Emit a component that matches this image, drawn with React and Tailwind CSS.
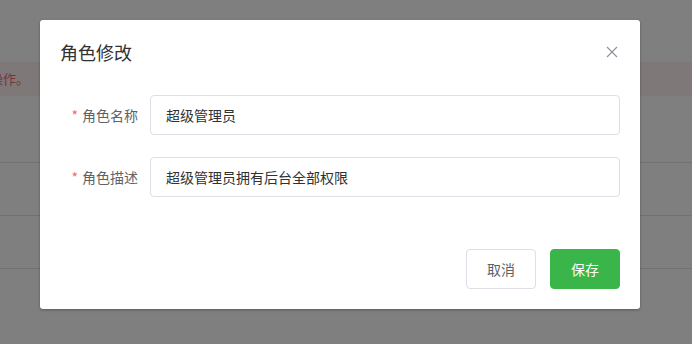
import React from "react";

const font = { fontFamily: '"Noto Sans CJK SC", "Noto Sans", sans-serif' };

function FormRow({ label, value }) {
  return (
    <div className="flex items-center">
      <div className="w-[90px] pr-3 text-right text-[14px] leading-[40px] text-[#606266]">
        <span className="mr-1 text-[#f56c6c]">*</span>
        {label}
      </div>
      <input
        readOnly
        value={value}
        className="h-10 flex-1 rounded-[4px] border border-[#dcdfe6] bg-white px-[15px] text-[14px] text-[#303133] outline-none"
        style={font}
      />
    </div>
  );
}

export default function App() {
  return (
    <div className="relative h-[344px] w-full overflow-hidden bg-white" style={font}>
      {/* page underneath the dialog */}
      <div className="pt-[62px]">
        <div className="flex h-[34px] items-center bg-[#fef0f0]">
          <span className="ml-[-10px] text-[13px] text-[#f56c6c]">操作。</span>
        </div>
        <div className="h-[67px] border-b border-[#e4e4e4]" />
        <div className="h-[53px] border-b border-[#e4e4e4]" />
        <div className="h-[53px] border-b border-[#e4e4e4]" />
      </div>

      <div className="absolute inset-0 bg-black/50" />

      <div className="absolute left-[40px] top-[20px] w-[600px] rounded-[3px] bg-white px-5 pb-5 shadow-[0_1px_3px_rgba(0,0,0,0.3)]">
        <div className="flex items-center justify-between pt-5">
          <div className="text-[18px] leading-6 text-[#303133]">角色修改</div>
          <svg width="12" height="12" viewBox="0 0 12 12" className="mr-[2px]">
            <path d="M1 1 L11 11 M11 1 L1 11" stroke="#909399" strokeWidth="1.2" fill="none" />
          </svg>
        </div>

        <div className="mt-[31px] flex flex-col gap-[22px]">
          <FormRow label="角色名称" value="超级管理员" />
          <FormRow label="角色描述" value="超级管理员拥有后台全部权限" />
        </div>

        <div className="mt-[52px] flex justify-end gap-[14px]">
          <button className="h-10 w-[70px] rounded-[4px] border border-[#dcdfe6] bg-white text-[14px] text-[#606266]">
            取消
          </button>
          <button className="h-10 w-[70px] rounded-[4px] border border-[#39b54a] bg-[#39b54a] text-[14px] text-white">
            保存
          </button>
        </div>
      </div>
    </div>
  );
}
